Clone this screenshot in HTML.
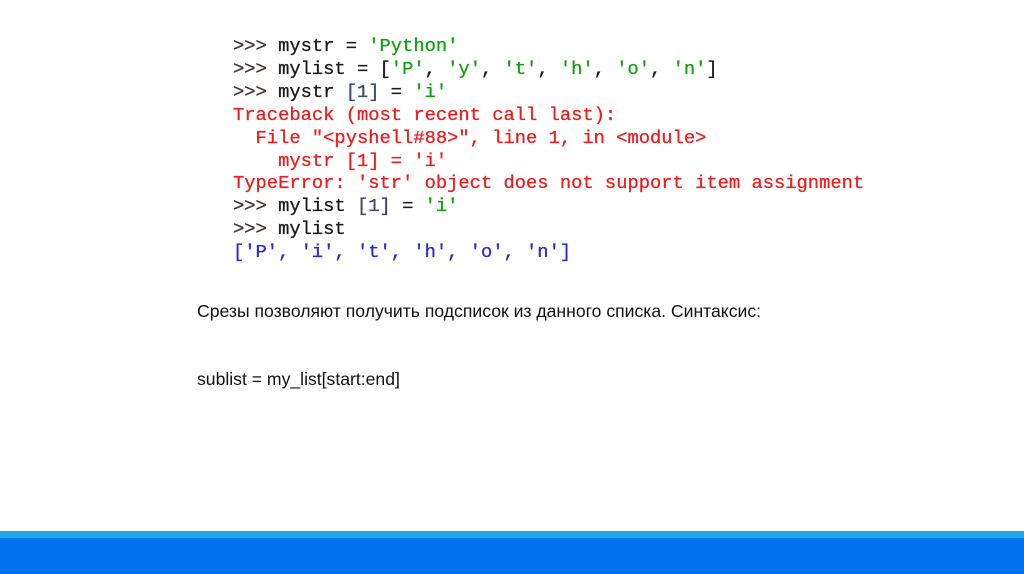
<!DOCTYPE html>
<html><head><meta charset="utf-8"><style>
html,body{margin:0;padding:0;background:#fff;width:1024px;height:574px;overflow:hidden;position:relative}
pre{position:absolute;left:233px;top:35px;margin:0;font-family:"Liberation Mono",monospace;font-size:18.8px;line-height:22.9px;color:#1a1a1a;-webkit-text-stroke:0.3px}
.p{color:#4a3030}.g{color:#10a010}.r{color:#ee1c1c}.b{color:#2828d8}.k{color:#3a4a6a}
.t{position:absolute;left:197px;font-family:"Liberation Sans",sans-serif;font-size:17.6px;color:#111;white-space:nowrap}
.c{position:absolute;left:0;top:531px;width:1024px;height:7px;background:#22a9e2}
.bl{position:absolute;left:0;top:538px;width:1024px;height:36px;background:#0072f0}
</style></head><body>
<pre><span class="p">&gt;&gt;&gt;</span> mystr = <span class="g">'Python'</span>
<span class="p">&gt;&gt;&gt;</span> mylist = [<span class="g">'P'</span>, <span class="g">'y'</span>, <span class="g">'t'</span>, <span class="g">'h'</span>, <span class="g">'o'</span>, <span class="g">'n'</span>]
<span class="p">&gt;&gt;&gt;</span> mystr <span class="k">[1]</span> = <span class="g">'i'</span>
<span class="r">Traceback (most recent call last):
  File "&lt;pyshell#88&gt;", line 1, in &lt;module&gt;
    mystr [1] = 'i'
TypeError: 'str' object does not support item assignment</span>
<span class="p">&gt;&gt;&gt;</span> mylist <span class="k">[1]</span> = <span class="g">'i'</span>
<span class="p">&gt;&gt;&gt;</span> mylist
<span class="b">['P', 'i', 't', 'h', 'o', 'n']</span></pre>
<div class="t" style="top:301px">Срезы позволяют получить подсписок из данного списка. Синтаксис:</div>
<div class="t" style="top:369px">sublist = my_list[start:end]</div>
<div class="c"></div><div class="bl"></div>
</body></html>
